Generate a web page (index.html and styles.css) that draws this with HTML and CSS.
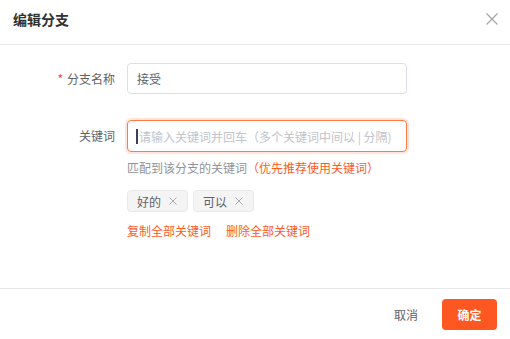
FILE: index.html
```html
<!DOCTYPE html>
<html>
<head>
<meta charset="utf-8">
<link rel="stylesheet" href="styles.css">
</head>
<body>
<div class="dialog">
  <div class="header">
    <div class="title">编辑分支</div>
    <svg class="close" width="12" height="12" viewBox="0 0 12 12"><path d="M0.5 0.5L11.5 11.5M11.5 0.5L0.5 11.5" stroke="#a0a0a0" stroke-width="1.1" fill="none"/></svg>
  </div>
  <div class="body">
    <div class="row row-name">
      <div class="label"><span class="req">*</span>分支名称</div>
      <div class="control">
        <div class="input">接受</div>
      </div>
    </div>
    <div class="row">
      <div class="label">关键词</div>
      <div class="control">
        <div class="input focus"><span class="caret"></span><span class="ph">请输入关键词并回车（多个关键词中间以 | 分隔)</span></div>
        <div class="help">匹配到该分支的关键词<span class="hl">（优先推荐使用关键词）</span></div>
        <div class="tags">
          <span class="tag">好的<svg class="x" width="8" height="8" viewBox="0 0 8 8"><path d="M0.5 0.5L7.5 7.5M7.5 0.5L0.5 7.5" stroke="#a8abb2" stroke-width="1" fill="none"/></svg></span>
          <span class="tag">可以<svg class="x" width="8" height="8" viewBox="0 0 8 8"><path d="M0.5 0.5L7.5 7.5M7.5 0.5L0.5 7.5" stroke="#a8abb2" stroke-width="1" fill="none"/></svg></span>
        </div>
        <div class="links">
          <span class="link">复制全部关键词</span>
          <span class="link">删除全部关键词</span>
        </div>
      </div>
    </div>
  </div>
  <div class="footer">
    <span class="btn-text">取消</span>
    <span class="btn-primary">确定</span>
  </div>
</div>
</body>
</html>
```

FILE: styles.css
```css
* { box-sizing: border-box; }
html, body {
  margin: 0;
  padding: 0;
  background: #fff;
}
body {
  font-family: "Noto Sans CJK SC", "Noto Sans", sans-serif;
  font-size: 12px;
  color: #606266;
}
.dialog {
  width: 510px;
  height: 339px;
  display: flex;
  flex-direction: column;
}
.header {
  height: 45px;
  padding: 0 12px 0 13px;
  display: flex;
  align-items: center;
  justify-content: space-between;
  border-bottom: 1px solid #e8e8e8;
}
.title {
  font-size: 14px;
  font-weight: bold;
  color: #303133;
  margin-top: -7px;
}
.close {
  margin-top: -6px;
}
.body {
  flex: 1;
  padding-top: 18px;
}
.row {
  display: flex;
}
.row-name {
  margin-bottom: 26px;
}
.label {
  width: 127px;
  padding-right: 12px;
  text-align: right;
  height: 31px;
  line-height: 31px;
  color: #606266;
  flex-shrink: 0;
}
.req {
  color: #f04b23;
  margin-right: 4px;
}
.control {
  width: 280px;
}
.input {
  height: 31px;
  border: 1px solid #dcdfe6;
  border-radius: 4px;
  padding: 0 9px;
  display: flex;
  align-items: center;
  color: #606266;
  font-size: 12px;
}
.input.focus {
  height: 32px;
  border-color: #ff7a45;
  box-shadow: 0 0 0 2px rgba(255, 110, 60, 0.18);
  padding-left: 8px;
}
.caret {
  width: 2px;
  height: 15px;
  background: #3c4058;
  margin-right: 1px;
}
.ph {
  color: #c0c4cc;
  white-space: nowrap;
}
.help {
  margin-top: 6px;
  line-height: 20px;
  color: #909399;
}
.hl {
  color: #ff5a1f;
}
.tags {
  margin-top: 12px;
  display: flex;
  gap: 5px;
}
.tag {
  height: 22px;
  display: inline-flex;
  align-items: center;
  padding: 0 10px 0 9px;
  background: #f4f4f5;
  border: 1px solid #e9e9eb;
  border-radius: 4px;
  color: #606266;
}
.x {
  margin-left: 8px;
}
.links {
  margin-top: 9px;
  line-height: 20px;
  display: flex;
  gap: 15px;
}
.link {
  color: #ff5a1f;
}
.footer {
  height: 51px;
  border-top: 1px solid #e8e8e8;
  display: flex;
  align-items: center;
  justify-content: flex-end;
  padding: 0 13px 0 0;
  gap: 12px;
}
.btn-text {
  color: #606266;
  padding: 0 12px;
  line-height: 31px;
}
.btn-primary {
  width: 55px;
  height: 31px;
  background: #ff5722;
  color: #fff;
  border-radius: 4px;
  display: flex;
  align-items: center;
  justify-content: center;
  font-weight: bold;
}
```
